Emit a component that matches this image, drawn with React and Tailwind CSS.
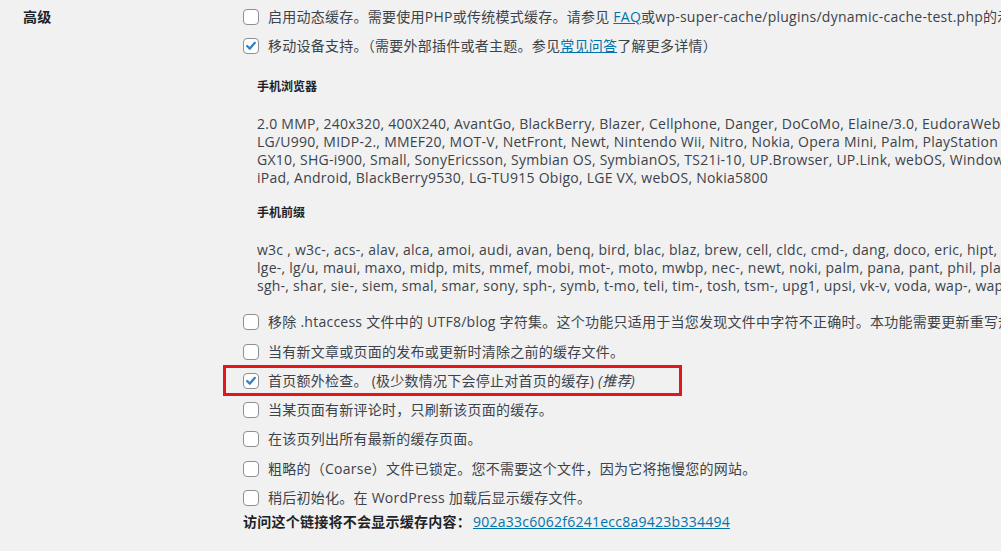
const devices = [
  "2.0 MMP, 240x320, 400X240, AvantGo, BlackBerry, Blazer, Cellphone, Danger, DoCoMo, Elaine/3.0, EudoraWeb, Googlebot-Mobile, hiptop, IEMobile, KYOCERA/WX310K,",
  "LG/U990, MIDP-2., MMEF20, MOT-V, NetFront, Newt, Nintendo Wii, Nitro, Nokia, Opera Mini, Palm, PlayStation Portable, portalmmm, Proxinet, ProxiNet, SHARP-TQ-",
  "GX10, SHG-i900, Small, SonyEricsson, Symbian OS, SymbianOS, TS21i-10, UP.Browser, UP.Link, webOS, Windows CE, WinWAP, YahooSeeker/M1A1-R2D2, iPhone, iPod,",
  "iPad, Android, BlackBerry9530, LG-TU915 Obigo, LGE VX, webOS, Nokia5800",
];

const prefixes = [
  "w3c , w3c-, acs-, alav, alca, amoi, audi, avan, benq, bird, blac, blaz, brew, cell, cldc, cmd-, dang, doco, eric, hipt, htc_, inno, ipaq, ipod, jigs, kddi, keji, leno, lg-c, lg-d, lg-g,",
  "lge-, lg/u, maui, maxo, midp, mits, mmef, mobi, mot-, moto, mwbp, nec-, newt, noki, palm, pana, pant, phil, play, port, prox, qwap, sage, sams, sany, sch-, sec-, send, seri,",
  "sgh-, shar, sie-, siem, smal, smar, sony, sph-, symb, t-mo, teli, tim-, tosh, tsm-, upg1, upsi, vk-v, voda, wap-, wapa, wapi, wapp, wapr, webc, winw, winw, xda , xda-",
];

const Checkbox = ({ checked }) => (
  <span className="flex h-4 w-4 shrink-0 items-center justify-center rounded-[4px] border border-[#8c8f94] bg-white">
    {checked && (
      <svg viewBox="0 0 16 16" className="h-[14px] w-[14px]">
        <path d="M3.6 8 L6.6 11 L12.4 4.4" fill="none" stroke="#3582c4" strokeWidth="2.6" strokeLinecap="round" strokeLinejoin="round" />
      </svg>
    )}
  </span>
);

const Row = ({ checked, children, className = "h-[29px]" }) => (
  <div className={`flex items-center gap-[9px] whitespace-nowrap ${className}`}>
    <Checkbox checked={checked} />
    <span>{children}</span>
  </div>
);

export default function App() {
  return (
    <div className="h-[551px] w-full overflow-hidden bg-[#f1f1f1] text-[14px] leading-[18px] tracking-[0.25px] text-[#3c434a] [font-family:'Open_Sans','Noto_Sans_CJK_SC',sans-serif]">
      <div className="flex">
        <div className="w-[243px] shrink-0 pl-[23px] pt-[8px] font-bold text-[#1d2327]">高级</div>
        <div className="flex flex-col pt-[2px]">
          <Row>
            启用动态缓存。需要使用PHP或传统模式缓存。请参见 <a className="text-[#0073aa] underline">FAQ</a>或wp-super-cache/plugins/dynamic-cache-test.php的示例代码。
          </Row>
          <Row checked>
            移动设备支持。（需要外部插件或者主题。参见<a className="text-[#0073aa] underline">常见问答</a>了解更多详情）
          </Row>

          <div className="pl-[14px] pt-[18px]">
            <p className="text-[12px] font-bold tracking-normal text-[#1d2327]">手机浏览器</p>
            <div className="mt-[19px] whitespace-nowrap">
              {devices.map((l) => (
                <div key={l}>{l}</div>
              ))}
            </div>
            <p className="mt-[17px] text-[12px] font-bold tracking-normal text-[#1d2327]">手机前缀</p>
            <div className="mt-[19px] whitespace-nowrap">
              {prefixes.map((l) => (
                <div key={l}>{l}</div>
              ))}
            </div>
          </div>

          <div className="mt-[11px] flex flex-col">
            <Row className="h-[31px]">
              移除 .htaccess 文件中的 UTF8/blog 字符集。这个功能只适用于当您发现文件中字符不正确时。本功能需要更新重写规则。
            </Row>
            <Row>当有新文章或页面的发布或更新时清除之前的缓存文件。</Row>
            <div className="relative">
              <Row checked>
                首页额外检查。 (极少数情况下会停止对首页的缓存) <em>(推荐)</em>
              </Row>
              <div className="absolute left-[-20px] top-[-1px] h-[31px] w-[459px] border-[3px] border-[#e3161b]" />
            </div>
            <Row>当某页面有新评论时，只刷新该页面的缓存。</Row>
            <Row className="h-[30px]">在该页列出所有最新的缓存页面。</Row>
            <Row>粗略的（Coarse）文件已锁定。您不需要这个文件，因为它将拖慢您的网站。</Row>
            <Row>稍后初始化。在 WordPress 加载后显示缓存文件。</Row>
            <p className="mt-[1px] whitespace-nowrap">
              <span className="font-bold text-[#1d2327]">访问这个链接将不会显示缓存内容：</span>
              <a className="ml-[2px] text-[#0073aa] underline">902a33c6062f6241ecc8a9423b334494</a>
            </p>
          </div>
        </div>
      </div>
    </div>
  );
}
